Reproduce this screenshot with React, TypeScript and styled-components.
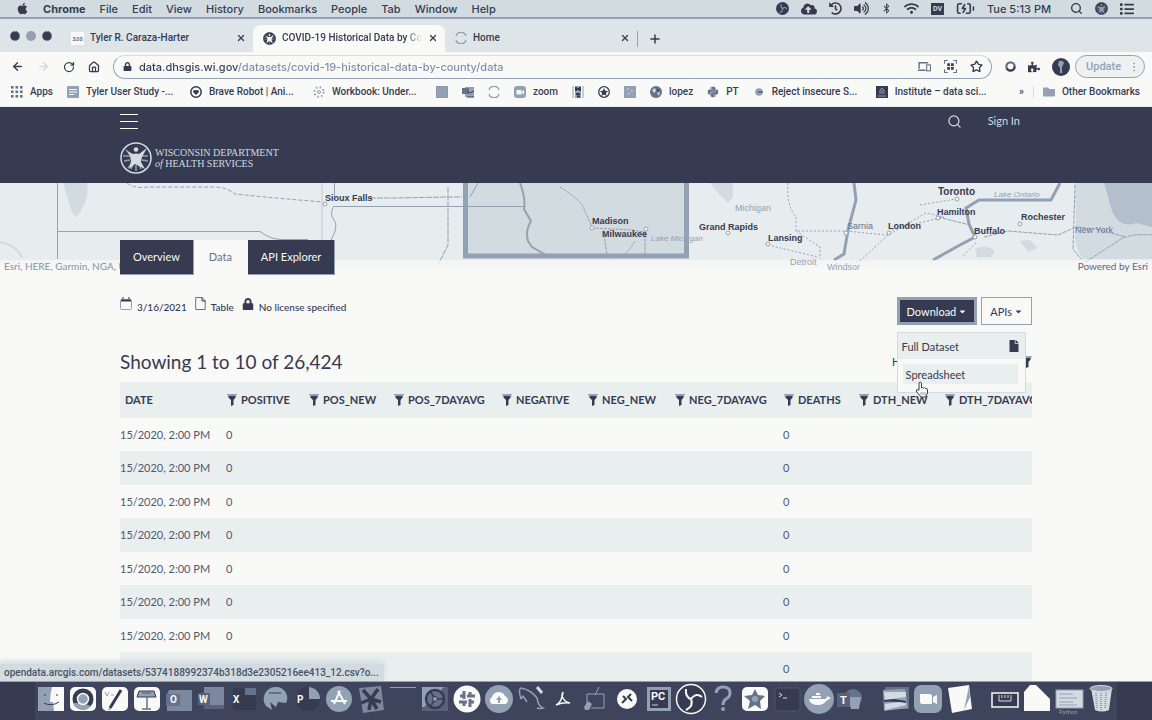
import React from "react";
import styled, { createGlobalStyle, css } from "styled-components";
import {
  FaApple, FaBluetoothB, FaCloudUploadAlt, FaHistory, FaVolumeUp, FaWifi, FaPuzzlePiece,
  FaFile, FaLock, FaPython, FaCaretDown, FaFolder, FaList,
} from "react-icons/fa";
import {
  ArrowLeft, ArrowRight, RotateCw, Home, Star, Search, X, Plus, BatteryCharging,
  EllipsisVertical,
} from "lucide-react";

const ink = "#363b51";
const slate = "#93a1b5";
const steel = "#66718a";
const mist = "#d1dbe0";
const paper = "#f9f9f7";
const haze = "#e9eeef";
const uiFont = `Roboto, "Liberation Sans", sans-serif`;
const pageFont = `Lato, "Liberation Sans", sans-serif`;

const GlobalStyle = createGlobalStyle`
  *, *::before, *::after { box-sizing: border-box; }
  body { margin: 0; background: ${paper}; color: ${ink}; font-family: ${pageFont}; }
  button { font: inherit; color: inherit; background: none; border: 0; padding: 0; cursor: pointer; }
  a { color: inherit; text-decoration: none; }
  svg { display: block; flex: none; }
`;

const Screen = styled.div`
  display: flex;
  flex-direction: column;
  height: 100vh;
  overflow: hidden;
`;

/* ---------- system menu bar ---------- */
const MenuBar = styled.header`
  display: flex;
  align-items: center;
  justify-content: space-between;
  flex: none;
  height: 19px;
  padding: 0 18px 0 16px;
  background: ${mist};
  border-bottom: 2px solid ${slate};
  font: 500 11px/16px Inter, ${uiFont};
`;
const MenuGroup = styled.nav<{ $gap: number }>`
  display: flex;
  align-items: center;
  gap: ${(p) => p.$gap}px;
`;
const MenuItem = styled.button<{ $strong?: boolean }>`
  font-weight: ${(p) => (p.$strong ? 700 : 500)};
  white-space: nowrap;
`;
const Clock = styled.time`
  margin-right: 7px;
  white-space: nowrap;
`;
const InputBadge = styled.span`
  display: flex;
  align-items: center;
  justify-content: center;
  width: 13px;
  height: 12px;
  background: ${ink};
  color: ${mist};
  font: 700 7px/12px ${uiFont};
`;

/* ---------- browser chrome ---------- */
const TabStrip = styled.div`
  display: flex;
  align-items: stretch;
  flex: none;
  height: 33px;
  padding: 6px 0 0 10px;
  background: #dee5e9;
`;
const Lights = styled.div`
  display: flex;
  gap: 6px;
  width: 51px;
  padding-top: 6px;
`;
const Light = styled.span<{ $soft?: boolean }>`
  width: 10px;
  height: 10px;
  border-radius: 50%;
  border: 1px dotted ${slate};
  background: ${(p) => (p.$soft ? slate : ink)};
`;
const Tab = styled.div<{ $active?: boolean }>`
  display: flex;
  align-items: center;
  gap: 6px;
  width: 192px;
  padding: 0 7px 1px 10px;
  border-radius: 7px 7px 0 0;
  background: ${(p) => (p.$active ? paper : "transparent")};
  font: 500 10px/16px ${uiFont};
`;
const TabTitle = styled.span<{ $fade?: boolean }>`
  flex: 1;
  overflow: hidden;
  white-space: nowrap;
  ${(p) => p.$fade && css`mask-image: linear-gradient(90deg, #000 88%, transparent);`}
`;
const Favicon = styled.span`
  padding: 3px 0;
  width: 13px;
  background: ${paper};
  color: ${steel};
  font: 700 6px/7px ${uiFont};
  text-align: center;
`;
const NewTab = styled.button`
  display: flex;
  align-items: center;
  align-self: center;
  height: 16px;
  padding-left: 10px;
  border-left: 1px solid ${slate};
`;

const ToolBar = styled.div`
  display: flex;
  align-items: center;
  flex: none;
  gap: 13px;
  height: 29px;
  padding: 0 7px 0 11px;
  background: ${paper};
`;
const Address = styled.label`
  display: flex;
  align-items: center;
  flex: 1;
  gap: 13px;
  height: 24px;
  padding: 0 8px 0 9px;
  border: 1px solid ${slate};
  border-top-color: ${mist};
  border-radius: 12px;
`;
const AddressInput = styled.input`
  flex: 1;
  min-width: 0;
  margin-left: -6px;
  padding: 0;
  border: 0;
  outline: 0;
  background: linear-gradient(90deg, ${ink} 99px, #7f8ca2 99px);
  background-clip: text;
  -webkit-text-fill-color: transparent;
  color: ${ink};
  font: 500 11px/16px Inter, ${uiFont};
`;
const Extensions = styled.div`
  display: flex;
  align-items: center;
  gap: 12px;
`;
const Avatar = styled.span`
  display: flex;
  align-items: center;
  justify-content: center;
  width: 18px;
  height: 18px;
  border-radius: 50%;
  background: ${ink};
`;
const UpdateButton = styled.button`
  display: flex;
  align-items: center;
  justify-content: space-between;
  width: 70px;
  height: 23px;
  margin-left: -7px;
  padding: 0 4px 0 10px;
  border: 1px solid ${slate};
  border-radius: 12px;
  background: #eef1f2;
  color: ${slate};
  font: 500 11px/16px ${uiFont};
`;

const BookmarkBar = styled.nav`
  display: flex;
  align-items: center;
  flex: none;
  gap: 14px;
  height: 26px;
  padding: 0 12px 3px 11px;
  border-bottom: 1px solid ${haze};
  background: ${paper};
  font: 500 10px/14px ${uiFont};
`;
const Bookmark = styled.a`
  display: flex;
  align-items: center;
  gap: 7px;
  white-space: nowrap;
`;
const BookmarkLabel = styled.span<{ $long?: boolean }>`
  ${(p) => p.$long && "width: 90px;"}
`;
const BookmarkEnd = styled.div`
  display: flex;
  align-items: center;
  gap: 9px;
  margin-left: auto;
`;
const Rule = styled.span`
  width: 1px;
  height: 12px;
  background: ${mist};
`;

/* ---------- web page ---------- */
const Page = styled.main`
  position: relative;
  flex: 1;
  min-height: 0;
  overflow: hidden;
  background: ${paper};
`;
const Wrap = styled.div`
  max-width: 912px;
  margin: 0 auto;
`;
const SiteHeader = styled.header`
  padding: 5px 0 9px;
  background: ${ink};
  color: ${mist};
`;
const HeaderTop = styled.div`
  display: flex;
  align-items: center;
  height: 18px;
  padding-right: 12px;
  font-size: 11px;
  line-height: 18px;
`;
const Burger = styled.button`
  display: flex;
  flex-direction: column;
  gap: 6px;
  width: 18px;
  margin-right: auto;
`;
const BurgerLine = styled.span`
  height: 1px;
  background: ${paper};
`;
const SignIn = styled.a`
  margin-left: 26px;
`;
const Brand = styled.a`
  display: flex;
  align-items: center;
  gap: 3px;
  margin-top: 12px;
  font: 400 10px/11px "Liberation Serif", serif;
`;

const Hero = styled.section`
  position: relative;
  display: flex;
  flex-direction: column;
  justify-content: flex-end;
  height: 92px;
`;
const MapArt = styled.svg`
  position: absolute;
  inset: 0 0 auto;
  width: 100%;
  height: 88px;
`;
const Credit = styled.span<{ $right?: boolean }>`
  position: absolute;
  bottom: 0;
  ${(p) => (p.$right ? "right: 4px;" : "left: 4px;")}
  color: ${(p) => (p.$right ? "#5c667e" : "#8593a8")};
  font-size: 10px;
  line-height: 17px;
`;
const HeroWrap = styled(Wrap)`
  position: relative;
  width: 100%;
`;
const PageTabs = styled.nav`
  display: flex;
`;
const PageTab = styled.a<{ $active?: boolean }>`
  padding: 0 ${(p) => (p.$active ? 15 : 13)}px;
  border: 1px solid ${(p) => (p.$active ? paper : slate)};
  border-width: 0 1px 1px 0;
  background: ${(p) => (p.$active ? paper : ink)};
  color: ${(p) => (p.$active ? steel : paper)};
  font-size: 11px;
  line-height: 34px;
`;

const ActionRow = styled.div`
  display: flex;
  align-items: flex-start;
  justify-content: space-between;
  padding-top: 22px;
`;
const MetaList = styled.div`
  display: flex;
  gap: 8px;
  font: 500 10px/18px ${pageFont};
`;
const Meta = styled.span`
  display: flex;
  align-items: center;
  gap: 5px;
  svg { margin-bottom: 6px; }
`;
const ButtonGroup = styled.div`
  position: relative;
  display: flex;
  gap: 4px;
`;
const ActionButton = styled.button<{ $primary?: boolean }>`
  display: flex;
  align-items: center;
  gap: 2px;
  height: 28px;
  padding: 0 ${(p) => (p.$primary ? 7 : 8)}px;
  border: ${(p) => (p.$primary ? 3 : 1)}px solid ${slate};
  background: ${(p) => (p.$primary ? ink : paper)};
  color: ${(p) => (p.$primary ? paper : ink)};
  font-size: 11px;
`;
const Menu = styled.div`
  position: absolute;
  top: 35px;
  left: 0;
  width: 129px;
  border: 1px solid ${mist};
  background: ${paper};
  font-size: 11px;
`;
const MenuHead = styled.div`
  display: flex;
  align-items: center;
  justify-content: space-between;
  height: 26px;
  padding: 0 5px 0 4px;
  background: ${haze};
`;
const MenuOption = styled.button`
  display: block;
  width: calc(100% - 12px);
  height: 20px;
  margin: 5px 6px 8px 5px;
  padding-left: 3px;
  background: ${haze};
  text-align: left;
`;
const Pointer = styled.svg`
  position: absolute;
  top: 84px;
  left: 18px;
`;

const TitleRow = styled.div`
  display: flex;
  align-items: center;
  justify-content: space-between;
  margin: 23px 0 6px;
`;
const Title = styled.h1`
  margin: 0;
  font: 400 19px/28px ${pageFont};
`;
const FilterToggle = styled.button`
  display: flex;
  align-items: center;
  justify-content: space-between;
  width: 140px;
  font-size: 11px;
  line-height: 14px;
`;

const TableClip = styled.div`
  overflow: hidden;
`;
const Table = styled.table`
  width: 960px;
  border-collapse: collapse;
  table-layout: fixed;
  font-size: 11px;
  line-height: 16px;
`;
const HeadCell = styled.th<{ $width: number }>`
  width: ${(p) => p.$width}px;
  height: 36px;
  padding: 0 0 0 5px;
  background: ${haze};
  font-weight: 700;
  text-align: left;
  white-space: nowrap;
`;
const HeadLabel = styled.span`
  display: flex;
  align-items: center;
  gap: 4px;
`;
const Row = styled.tr`
  height: 33px;
  &:nth-child(even) {
    height: 34px;
    background: ${haze};
  }
`;
const Cell = styled.td<{ $flush?: boolean }>`
  padding: 0 0 0 ${(p) => (p.$flush ? 0 : 4)}px;
  color: #4f5870;
  white-space: nowrap;
`;
const StatusBubble = styled.div`
  position: absolute;
  left: 0;
  bottom: 0;
  padding: 0 5px 0 4px;
  border-top: 1px solid #dde4e8;
  border-radius: 0 3px 0 0;
  background: ${mist};
  box-shadow: 0 -2px 5px ${mist};
  color: #4a5269;
  font: 500 10px/17px ${uiFont};
`;

/* ---------- dock ---------- */
const DockBar = styled.footer`
  display: flex;
  justify-content: center;
  flex: none;
  height: 39px;
  border-top: 1px solid ${slate};
  background: ${ink};
`;
const DockShelf = styled.nav`
  display: flex;
  gap: 13px;
  padding-top: 1px;
  background: #3e445b;
`;
const DockGroup = styled.div`
  display: flex;
`;
const DockButton = styled.button`
  width: 32px;
  height: 32px;
`;

const Funnel = () => (
  <svg width="10" height="12" viewBox="0 0 10 12" aria-hidden>
    <path d="M0 0h10l-1 3H1z" fill={slate} />
    <path d="M1 3h8L6.500 6v5l-2.500 1V6z" fill={ink} />
    <path d="M2 2.500h6" stroke={ink} />
  </svg>
);

const Seal = ({ size = 32, fg = mist, bg = ink, rim = mist }: { size?: number; fg?: string; bg?: string; rim?: string }) => (
  <svg width={size} height={size} viewBox="0 0 32 32" aria-hidden>
    <circle cx="16" cy="16" r="15" fill={bg} stroke={rim} strokeWidth="1.5" />
    <path d="M6 8l4 4M3 14h7M4 19l6-1M8 26l5-6M28 14h-7M28 19l-6-1M16 29v-6M11 27l2-5M21 27l-2-5" stroke={slate} strokeWidth="1.5" />
    <circle cx="16" cy="7.500" r="2.300" fill={fg} />
    <path d="M7 9l6 3q3-1 6 0l8-6-5 9-1 5 4 7-6-3-4-2-6 5 2-8-1-5z" fill={fg} />
  </svg>
);

const Spinner = () => (
  <svg width="12" height="12" viewBox="0 0 12 12" fill="none" stroke={slate} strokeWidth="1.4" aria-hidden>
    <path d="M1 4A5.2 5.2 0 0 1 11 4M1 8a5.2 5.2 0 0 0 10 0" />
  </svg>
);

const Glyph = ({ size = 12, children }: { size?: number; children: React.ReactNode }) => (
  <svg width={size} height={size} viewBox="0 0 12 12" aria-hidden>{children}</svg>
);

const CalendarMark = () => (
  <svg width="12" height="13" viewBox="0 0 12 13" aria-hidden>
    <rect x="0.500" y="2.500" width="11" height="10" rx="1" fill={paper} stroke={slate} />
    <path d="M1 3.500h10" stroke={ink} strokeWidth="2" />
    <path d="M3 0v3M9 0v3" stroke={steel} strokeWidth="1.500" />
  </svg>
);
const PageMark = () => (
  <svg width="11" height="13" viewBox="0 0 11 13" aria-hidden>
    <path d="M0.700 0.500h6.500l3 3.500v8.500H0.700z" fill={paper} stroke={steel} />
    <path d="M7 0.500V4h3.500" fill="none" stroke={ink} />
  </svg>
);

const bookmarkItems: { label?: string; name: string; icon: React.ReactNode }[] = [
  { name: "Apps", label: "Apps", icon: <Glyph>{[0, 4.5, 9].map((x) => [0, 4.5, 9].map((y) => <rect key={`${x}${y}`} x={x} y={y} width="2.6" height="2.6" fill={steel} />))}</Glyph> },
  { name: "Tyler User Study", label: "Tyler User Study -...", icon: <Glyph><rect width="12" height="12" rx="1" fill={slate} /><path d="M2 3.5h8M2 6h8M2 8.5h5" stroke={paper} /></Glyph> },
  { name: "Brave Robot", label: "Brave Robot | Ani...", icon: <Glyph><circle cx="6" cy="6" r="5.2" fill={paper} stroke={ink} strokeWidth="1.5" /><path d="M6 9L3 6q0-3 3-1.700q3-1.300 3 1.700z" fill={ink} /></Glyph> },
  { name: "Workbook", label: "Workbook: Under...", icon: <Glyph><circle cx="6" cy="6" r="4.700" fill="none" stroke={slate} strokeWidth="2" strokeDasharray="1.500 2.200" /><circle cx="6" cy="6" r="1.500" fill="none" stroke={slate} /></Glyph> },
  { name: "Grid", icon: <Glyph><rect width="12" height="12" fill={slate} /><path d="M0 0h12v12H0z" fill="none" stroke={steel} strokeDasharray="1 2" /></Glyph> },
  { name: "Outlook", icon: <Glyph><path d="M3 1h9v10H3z" fill={slate} /><path d="M0 2h7v6H0z" fill={steel} /><path d="M5 5l3 2 4-2M5 11h7" stroke={ink} fill="none" /></Glyph> },
  { name: "Home", icon: <Spinner /> },
  { name: "zoom", label: "zoom", icon: <Glyph><rect width="12" height="12" rx="3" fill={slate} /><path d="M2.500 4h5v4.500h-5zM8 5.500l2-1.500v4.500l-2-1.500z" fill={paper} /></Glyph> },
  { name: "Music", icon: <Glyph><path d="M1 0v12M11 0v12" stroke={slate} /><path d="M3 0h6v12H3z" fill={slate} /><path d="M4 1v4M8 1v4M4 3h4M4 8h4M5 10.500h3" stroke={ink} strokeWidth="2" /></Glyph> },
  { name: "Badge", icon: <Glyph><circle cx="6" cy="6" r="5.300" fill={paper} stroke={ink} strokeWidth="1.300" /><path d="M6 2l1.200 2.800 3 .2-2.300 2 .8 3L6 8.500 3.300 10l.8-3-2.300-2 3-.2z" fill={ink} /></Glyph> },
  { name: "Tiles", icon: <Glyph><rect width="12" height="12" fill={slate} /><path d="M3 3h2M7 5h2M4 8h2" stroke={mist} /></Glyph> },
  { name: "lopez", label: "lopez", icon: <Glyph><circle cx="6" cy="6" r="6" fill={steel} /><path d="M2 4l3-2 1 3-2 2zM7 7l3-1-1 4z" fill={mist} /><circle cx="8" cy="4" r="1" fill={ink} /></Glyph> },
  { name: "PT", label: "PT", icon: <FaPython size={12} color={steel} /> },
  { name: "Reject insecure", label: "Reject insecure S...", icon: <Glyph><circle cx="6" cy="6" r="3.800" fill={slate} /><path d="M5 6h5" stroke={ink} /></Glyph> },
  { name: "Institute", label: "Institute – data sci...", icon: <Glyph><rect width="12" height="12" fill={ink} /><path d="M4 8V4l2-2 2 2v4M2 10h8M6 4v4" stroke={slate} fill="none" /></Glyph> },
];

const places: [string, number, number, string?, number?, number?][] = [
  ["Sioux Falls", 325, 18, ink, 325, 21],
  ["Madison", 592, 41, ink, 592, 45],
  ["Milwaukee", 602, 54, ink, 646, 46],
  ["Grand Rapids", 699, 47, ink, 728, 50],
  ["Michigan", 735, 28, slate],
  ["Lansing", 768, 58, ink, 768, 61],
  ["Detroit", 790, 82, slate],
  ["Windsor", 827, 87, slate],
  ["Sarnia", 847, 46, steel, 846, 50],
  ["London", 888, 46, ink, 889, 50],
  ["Toronto", 938, 12, ink, 957, 16],
  ["Hamilton", 937, 32, ink, 938, 35],
  ["Buffalo", 974, 51, ink, 975, 54],
  ["Rochester", 1021, 37, ink, 1020, 41],
  ["New York", 1075, 50, steel],
];

const RegionMap = () => (
  <MapArt viewBox="0 0 1152 88" preserveAspectRatio="xMidYMin slice" role="img" aria-label="Region map">
    <defs>
      <linearGradient id="fade" x1="0" y1="0" x2="0" y2="1">
        <stop offset="0" stopColor={paper} stopOpacity="0.6" />
        <stop offset="1" stopColor={paper} />
      </linearGradient>
    </defs>
    <rect width="1152" height="88" fill="#e7ecee" />
    <path d="M63 0h24q2 12-3 22l-7 12-5-4z" fill={mist} />
    <path d="M710 0h22q4 14-4 20l-8-8zM1020 58l10-1 8 8-10 4zM975 66q10-6 20 2l-4 6h-14z" fill={mist} />
    <path d="M1075 0h77v76h-70q-10-18-6-34z" fill={mist} />
    <path d="M1104 0h48v44l-16-4q-16 6-24-12z" fill="#b4bfcc" />
    <g fill="none" stroke={slate}>
      <path d="M57.500 0V76M58 48.500H260q10 8 22 8h26M334.500 0V14M334 23.500H463M334 23q-5 8 0 14t-3 20" />
      <path d="M127 0q8 6 20 4h66q14 0 22 7l40 4 48 4" strokeDasharray="4 2" />
      <path d="M322 0V57M0 59q18 4 22 16" stroke={mist} strokeWidth="2" />
      <path d="M370 15h26l52-1h14M448 4v58l-10 20" strokeDasharray="6 1" />
      <path d="M788 0q-2 22 8 34v14h50l40 4 8-6 50-12-18-4-38 22-26 24-32 16M796 48l24 16 0 12M768 62l50 12" strokeDasharray="2 2" />
      <path d="M938 34l32 8M984 54l24-6 50 4 18-8 20 2 30 8M1075 2l-2 64 8 10M1152 52q-24-2-34 6l-34 22" strokeDasharray="4 1" />
      <path d="M976 60l-14 14M920 22l36-6" strokeDasharray="2 2" />
      <path d="M854 0l2 17-8 30-4 24-10 6M1060 0l-9 17h-72l-13 8 3 16 6 13-15 8-27 15" strokeWidth="3" />
    </g>
    <rect x="465.500" y="-6" width="221" height="79" fill={mist} stroke={slate} strokeWidth="5" />
    <g fill="none" stroke={slate}>
      <path d="M468 23.500h57M478 0l-8 14" />
      <path d="M520 0q6 16 4 26l7 12q-6 10-3 20l4 6 14 8" strokeWidth="2" />
      <path d="M560 4q22 14 24 22l8 18M645 48v28M592 45l40 2 12 2M604 52l3 20q16 8 28-14" strokeDasharray="3 1" />
    </g>
    <rect y="77" width="1152" height="11" fill="url(#fade)" />
    <g fontFamily="Liberation Sans, sans-serif" fontSize="9" fontWeight="700">
      {places.map(([name, x, y, fill, cx, cy]) => (
        <g key={name}>
          {cx && <circle cx={cx} cy={cy} r="2" fill={paper} stroke={slate} />}
          <text x={x} y={y} fill={fill} fontSize={name === "Toronto" ? 10 : 9}
            fontWeight={fill === ink ? 700 : 400}>{name}</text>
        </g>
      ))}
      <text x="651" y="58" fill={slate} fontSize="8" fontStyle="italic" fontWeight="400">Lake Michigan</text>
      <text x="994" y="14" fill={slate} fontSize="8" fontStyle="italic" fontWeight="400">Lake Ontario</text>
    </g>
  </MapArt>
);

const columns: [string, number][] = [
  ["DATE", 102], ["POSITIVE", 82], ["POS_NEW", 85], ["POS_7DAYAVG", 108], ["NEGATIVE", 86],
  ["NEG_NEW", 87], ["NEG_7DAYAVG", 109], ["DEATHS", 75], ["DTH_NEW", 86], ["DTH_7DAYAVG", 140],
];
const rows: Record<string, string>[] = [
  ...Array.from({ length: 7 }, () => ({ DATE: "15/2020, 2:00 PM", POSITIVE: "0", DEATHS: "0" })),
  { DEATHS: "0" },
];

const tile = <rect x="3" y="4" width="26" height="24" rx="5" fill={paper} />;
const letter = (text: string, x: number, y = 20) => (
  <text x={x} y={y} fill={paper} fontFamily="Roboto, sans-serif" fontSize="10" fontWeight="700">{text}</text>
);

const dockGroups: [string, React.ReactNode][][] = [
  [
    ["Finder", <><rect x="3" y="4" width="26" height="24" fill={slate} /><path d="M17 4h12v24H19l-1-9h-3q0-8 2-15z" fill={paper} /><path d="M10 11v2M22 11v2M9 20q7 4 15-1" stroke={ink} fill="none" /></>],
    ["Chrome", <>{tile}<circle cx="16" cy="16" r="10.500" fill={ink} /><path d="M6 20a10.500 10.500 0 0 0 18 3L16 20z" fill={slate} /><circle cx="16" cy="16" r="5.500" fill={slate} stroke={paper} strokeWidth="1.500" /></>],
    ["Editor", <>{tile}<path d="M22 7L11 25" stroke={ink} strokeWidth="3" /><path d="M11 25l-1 2" stroke={slate} strokeWidth="2" /><path d="M6 9l2 4 2-4M12 12h3" stroke={slate} fill="none" /></>],
    ["Keynote", <>{tile}<path d="M8 8h15l2 6H6z" fill={slate} stroke={ink} /><path d="M11 10h9M16 14v12M11 26h9" stroke={steel} strokeWidth="1.500" /></>],
    ["Outlook", <><path d="M6 7h23v21H4V11z" fill="#7b88a0" /><path d="M3 11h14v12H3z" fill={steel} />{letter("O", 7)}</>],
    ["Word", <><path d="M9 4h20v18H9z" fill="#7b88a0" /><path d="M9 22h20v4H9zM3 10h12v12H3z" fill="#59627a" />{letter("W", 4)}</>],
    ["Excel", <><path d="M6 5h23v22H6z" fill={ink} /><path d="M18 5h11v7H18z" fill={steel} />{letter("X", 6)}</>],
    ["Remote", <><path d="M16 4a12 12 0 0 0-9 19l6 4-2-8 6 5 2-5 8 1A11 11 0 0 0 16 4z" fill={slate} /><path d="M10 10h12" stroke={ink} /></>],
    ["PowerPoint", <><circle cx="17" cy="16" r="12" fill={ink} /><path d="M18 4a12 12 0 0 1 11 12H18z" fill={slate} />{letter("P", 6)}</>],
    ["App Store", <><circle cx="16" cy="16" r="13" fill={slate} /><path d="M17 8l-6 13M15 8l7 13M8 18h16" stroke={paper} strokeWidth="2" fill="none" /></>],
    ["Mathematica", <><path d="M4 5l22-2 3 24-21 3z" fill="#7b88a0" /><path d="M16 16L8 7M16 16L23 6M16 16l10 3M16 16l-2 11M16 16l-10 4M16 16l6 10" stroke={ink} strokeWidth="3.500" /></>],
    ["Window", <path d="M3 4.500h26" stroke={slate} />],
    ["Preferences", <><path d="M3 4h26v24H3z" fill="#59627a" /><path d="M3 4h22L5 24H3z" fill={slate} /><circle cx="16" cy="16" r="9" fill={steel} stroke={ink} strokeWidth="2.500" /><circle cx="16" cy="16" r="2.500" fill={slate} stroke={ink} /><path d="M18 16h7M15 14l-4-6M15 18l-4 6" stroke={ink} strokeWidth="1.500" /></>],
    ["Slack", <><circle cx="16" cy="16" r="13.500" fill={paper} /><path d="M13 8v8M19 16v8M8 19h8M16 13h8M9 13h3M20 19h3M19 9v3M13 20v3" stroke={steel} strokeWidth="3" /></>],
    ["Cloud", <><circle cx="16" cy="16" r="14" fill={slate} /><path d="M9 21a4 4 0 0 1 0-7 7 7 0 0 1 13-1 4.500 4.500 0 0 1 1 8z" fill={paper} /><path d="M16 13l3 4h-2v3h-2v-3h-2z" fill={slate} /></>],
    ["MySQL", <><path d="M6 16Q3 6 6 5q10 2 16 10 1 8 6 10-4 1-6 0M6 16l2-3 4 6" fill="none" stroke={slate} strokeWidth="1.500" /><path d="M22 4l5 6" stroke={mist} strokeWidth="3" /></>],
    ["Acrobat", <path d="M9 22q6-3 7-13-2 4 0 6 2 4 7 5-7-1-14 2z" fill="none" stroke={paper} strokeWidth="1.500" />],
    ["Flow", <><path d="M8 24V11h17v14H12M20 4l-4 8" fill="none" stroke={slate} /><path d="M5 24l4-6 4 3-3 6H6z" fill={slate} /></>],
    ["Remote Desktop", <><circle cx="16" cy="16" r="10" fill={paper} /><path d="M12 13l3 3-4 4M20 11l-3 3 4 4" stroke={ink} strokeWidth="2" fill="none" /></>],
    ["PyCharm", <><rect x="4" y="4" width="24" height="24" fill={slate} /><rect x="7" y="7" width="18" height="18" fill={ink} /><text x="8" y="17" fill={paper} fontFamily="Roboto, sans-serif" fontSize="11" fontWeight="700">PC</text><path d="M9 22h6" stroke={slate} strokeWidth="1.500" /></>],
    ["OBS", <><circle cx="16" cy="16" r="14.500" fill={ink} stroke={paper} strokeWidth="1.500" /><path d="M16 16Q10 14 11 6M16 16q5-7 11-2M16 16q3 7-5 11" stroke={paper} strokeWidth="2" fill="none" /></>],
    ["Help", <><path d="M9 10q1-6 7-6 7 0 7 6 0 4-4 6-3 2-3 6" fill="none" stroke={slate} strokeWidth="3" /><circle cx="16" cy="26" r="2" fill={slate} /></>],
    ["iMovie", <>{tile}<path d="M16 6l3 6 7 1-5 5 1 8-6-4-7 4 2-8-6-5 8-1z" fill={steel} /><circle cx="16" cy="16" r="3" fill={slate} /></>],
    ["Terminal", <><rect x="4" y="5" width="25" height="23" rx="3" fill={ink} stroke="#59627a" strokeDasharray="2 1" /><path d="M8 10l3 2-3 2M12 15h4" stroke={mist} fill="none" /></>],
    ["Docker", <><circle cx="16" cy="16" r="15" fill={slate} /><path d="M6 16h17q1-4 3-2l2 1q-3 2-5 3-2 4-8 4-8 0-9-6zM9 13h9v2H9zM13 10h4v2h-4z" fill={paper} /></>],
    ["Teams", <><circle cx="18" cy="15" r="9" fill={steel} /><path d="M13 14h13l-2 12h-8z" fill={slate} /><path d="M2 10h13v14H2z" fill="#59627a" /><text x="5" y="21" fill={paper} fontFamily="Roboto, sans-serif" fontSize="11" fontWeight="700">T</text></>],
  ],
  [
    ["Photos", <><path d="M5 4h24v22H5z" fill={steel} /><path d="M3 7l22-1 3 19-24 3z" fill={slate} /><path d="M4 9h22v5L5 17zM5 21l21-3v4L5 27z" fill={mist} /><path d="M4 18l10-1 12 2" stroke={ink} strokeWidth="2" /></>],
    ["Zoom", <><rect x="2" y="2" width="28" height="28" rx="7" fill={slate} /><path d="M8 11h10q2 0 2 2v8H10q-2 0-2-2zM21 14l4-2v9l-4-2z" fill={paper} /></>],
    ["Pages", <><path d="M4 5l21-3 3 24-20 4z" fill={paper} /><path d="M25 3l-5 24 6-13z" fill={slate} /></>],
  ],
  [
    ["Window capture", <><rect x="3" y="10" width="26" height="14" fill={ink} stroke={paper} strokeWidth="1.500" /><path d="M10 12v6h12v-6M13 12v3M16 12v3M19 12v3" stroke={mist} fill="none" /></>],
    ["Document", <path d="M3 9l6-7h6l14 14v12H3z" fill={paper} />],
    ["Python window", <><rect x="3" y="7" width="27" height="18" fill={mist} stroke={slate} /><path d="M6 11h14M6 15h18M6 19h14M6 22h18" stroke={slate} /><text x="6" y="31" fill={slate} fontFamily="Roboto, sans-serif" fontSize="6">Python</text></>],
    ["Trash", <><path d="M6 5h21l-3 22q-7 3-14 0z" fill={mist} /><ellipse cx="16" cy="5.500" rx="11" ry="3" fill={slate} stroke={mist} /><path d="M11 10l1 16M16 10v17M21 10l-1 16" stroke={slate} strokeDasharray="1 1" strokeWidth="2" /></>],
  ],
];

export default function App() {
  return (
    <Screen>
      <GlobalStyle />
      <MenuBar>
        <MenuGroup $gap={14}>
          <MenuItem aria-label="Apple menu"><FaApple size={13} /></MenuItem>
          <MenuItem $strong>Chrome</MenuItem>
          {["File", "Edit", "View", "History", "Bookmarks", "People", "Tab", "Window", "Help"].map((t) => (
            <MenuItem key={t}>{t}</MenuItem>
          ))}
        </MenuGroup>
        <MenuGroup $gap={12}>
          <svg width="13" height="13" viewBox="0 0 32 32" aria-hidden>
            <circle cx="16" cy="16" r="16" fill={ink} />
            <path d="M16 16Q10 14 13 5M16 16q6-5 11 1M16 16q2 7-7 10" stroke={slate} strokeWidth="2.500" fill="none" />
          </svg>
          <FaCloudUploadAlt size={16} />
          <FaHistory size={13} />
          <FaVolumeUp size={15} />
          <FaBluetoothB size={11} />
          <FaWifi size={15} />
          <InputBadge>DV</InputBadge>
          <BatteryCharging size={19} strokeWidth={2} />
          <Clock>Tue 5:13 PM</Clock>
          <Search size={13} strokeWidth={2.5} />
          <Seal size={13} fg={slate} rim={ink} />
          <FaList size={14} />
        </MenuGroup>
      </MenuBar>

      <TabStrip>
        <Lights><Light /><Light $soft /><Light /></Lights>
        <Tab>
          <Favicon>320</Favicon>
          <TabTitle>Tyler R. Caraza-Harter</TabTitle>
          <button aria-label="Close tab"><X size={10} strokeWidth={3} /></button>
        </Tab>
        <Tab $active>
          <Seal size={13} fg={paper} bg={ink} rim={ink} />
          <TabTitle $fade>COVID-19 Historical Data by County</TabTitle>
          <button aria-label="Close tab"><X size={10} strokeWidth={3} /></button>
        </Tab>
        <Tab>
          <Spinner />
          <TabTitle>Home</TabTitle>
          <button aria-label="Close tab"><X size={10} strokeWidth={3} /></button>
        </Tab>
        <NewTab aria-label="New tab"><Plus size={14} strokeWidth={2.5} /></NewTab>
      </TabStrip>

      <ToolBar>
        <button aria-label="Back"><ArrowLeft size={13} strokeWidth={2.5} /></button>
        <button aria-label="Forward"><ArrowRight size={13} color={mist} strokeWidth={2.5} /></button>
        <button aria-label="Reload"><RotateCw size={12} strokeWidth={2.5} /></button>
        <button aria-label="Home page"><Home size={12} strokeWidth={2.5} /></button>
        <Address>
          <FaLock size={9} />
          <AddressInput aria-label="Address" defaultValue="data.dhsgis.wi.gov/datasets/covid-19-historical-data-by-county/data" />
          <Glyph size={13}><path d="M1 8V2.500h8.500M0 9.500h7" fill="none" stroke={steel} strokeWidth="1.300" /><rect x="8" y="4.500" width="3.500" height="5.500" fill={paper} stroke={steel} /></Glyph>
          <Glyph size={13}><path d="M.5 3.500v-3h3M8.500.5h3v3M11.500 8.500v3h-3M3.500 11.500h-3v-3" fill="none" stroke={steel} /><path d="M3 3h2.500v2.500H3zM6.500 3H9v2.500H6.500zM3 6.500h2.500V9H3zM6.500 6.500H9V9H6.500z" fill={ink} /></Glyph>
          <Star size={13} strokeWidth={2.5} />
        </Address>
        <Extensions>
          <Glyph size={11}><circle cx="6" cy="6" r="4.500" fill={paper} stroke={steel} strokeWidth="2.500" /><path d="M2 8a4.500 4.500 0 0 0 8.500-2" fill="none" stroke={ink} strokeWidth="2" /></Glyph>
          <FaPuzzlePiece size={12} />
          <Avatar><svg width="10" height="14" viewBox="0 0 10 14" aria-hidden><path d="M3 1q4-1 5 2L6 7v6H4V8L2 5z" fill={slate} /></svg></Avatar>
          <UpdateButton>Update<EllipsisVertical size={12} /></UpdateButton>
        </Extensions>
      </ToolBar>

      <BookmarkBar>
        {bookmarkItems.map((b) => (
          <Bookmark key={b.name} href="#" aria-label={b.name}>
            {b.icon}
            {b.label && <BookmarkLabel $long={b.label.endsWith("...")}>{b.label}</BookmarkLabel>}
          </Bookmark>
        ))}
        <BookmarkEnd>
          <button aria-label="More bookmarks">»</button>
          <Rule />
          <Bookmark href="#"><FaFolder size={12} color={slate} />Other Bookmarks</Bookmark>
        </BookmarkEnd>
      </BookmarkBar>

      <Page>
        <SiteHeader>
          <Wrap>
            <HeaderTop>
              <Burger aria-label="Menu"><BurgerLine /><BurgerLine /><BurgerLine /></Burger>
              <button aria-label="Search"><Search size={15} strokeWidth={2} /></button>
              <SignIn href="#">Sign In</SignIn>
            </HeaderTop>
            <Brand href="#">
              <Seal />
              <span>WISCONSIN DEPARTMENT<br /><i>of</i> HEALTH SERVICES</span>
            </Brand>
          </Wrap>
        </SiteHeader>

        <Hero>
          <RegionMap />
          <Credit>Esri, HERE, Garmin, NGA, U</Credit>
          <Credit $right>Powered by Esri</Credit>
          <HeroWrap>
            <PageTabs>
              <PageTab href="#">Overview</PageTab>
              <PageTab href="#" $active>Data</PageTab>
              <PageTab href="#">API Explorer</PageTab>
            </PageTabs>
          </HeroWrap>
        </Hero>

        <Wrap>
          <ActionRow>
            <MetaList>
              <Meta><CalendarMark />3/16/2021</Meta>
              <Meta><PageMark />Table</Meta>
              <Meta><FaLock size={12} />No license specified</Meta>
            </MetaList>
            <ButtonGroup>
              <ActionButton $primary aria-expanded="true">Download<FaCaretDown size={9} /></ActionButton>
              <ActionButton>APIs<FaCaretDown size={9} /></ActionButton>
              <Menu>
                <MenuHead>Full Dataset<FaFile size={12} /></MenuHead>
                <MenuOption>Spreadsheet</MenuOption>
              </Menu>
              <Pointer width="14" height="17" viewBox="0 0 14 17" aria-hidden>
                <path d="M4 9V2q1-2 2.500 0v5q1-1 2 0 1-1 2 .5 2-.5 2 1.500v3l-2 4H6L1 10q0-2 3-1z" fill={paper} stroke={ink} />
                <path d="M6 11v3M8 11v3M10 11v3" stroke={slate} />
              </Pointer>
            </ButtonGroup>
          </ActionRow>

          <TitleRow>
            <Title>Showing 1 to 10 of 26,424</Title>
            <FilterToggle aria-label="Filters">H<Funnel /></FilterToggle>
          </TitleRow>

          <TableClip>
            <Table>
              <thead>
                <tr>
                  {columns.map(([name, width], i) => (
                    <HeadCell key={name} $width={width}>
                      <HeadLabel>{i > 0 && <Funnel />}{name}</HeadLabel>
                    </HeadCell>
                  ))}
                </tr>
              </thead>
              <tbody>
                {rows.map((row, r) => (
                  <Row key={r}>
                    {columns.map(([name], i) => <Cell key={name} $flush={i === 0}>{row[name]}</Cell>)}
                  </Row>
                ))}
              </tbody>
            </Table>
          </TableClip>
        </Wrap>
        <StatusBubble>opendata.arcgis.com/datasets/5374188992374b318d3e2305216ee413_12.csv?o...</StatusBubble>
      </Page>

      <DockBar>
        <DockShelf>
          {dockGroups.map((group, g) => (
            <DockGroup key={g}>
              {group.map(([name, art]) => (
                <DockButton key={name} aria-label={name}>
                  <svg width="32" height="32" viewBox="0 0 32 32" aria-hidden>{art}</svg>
                </DockButton>
              ))}
            </DockGroup>
          ))}
        </DockShelf>
      </DockBar>
    </Screen>
  );
}
